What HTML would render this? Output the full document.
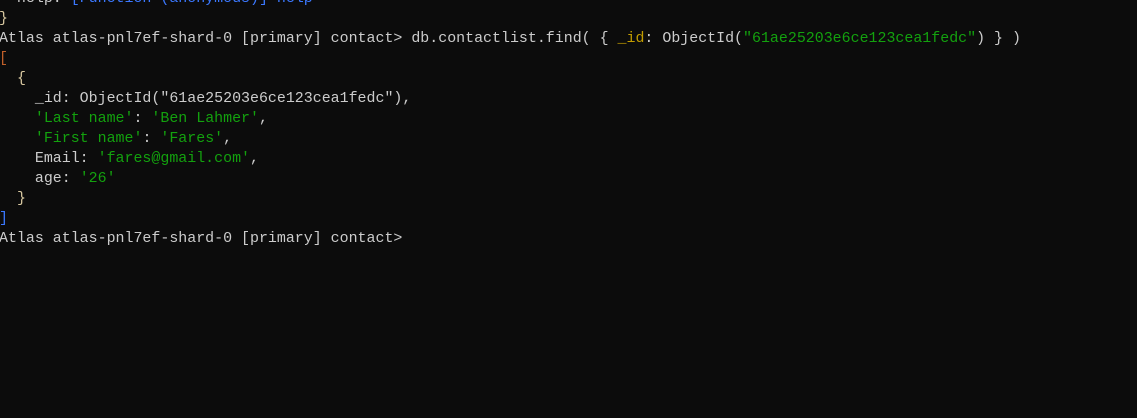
<!DOCTYPE html>
<html><head><meta charset="utf-8"><style>
html,body{margin:0;padding:0;background:#0c0c0c;width:1137px;height:418px;overflow:hidden}
pre{margin:0;position:absolute;left:-1px;top:-11px;font-family:"Liberation Mono","DejaVu Sans Mono",monospace;font-size:14.95px;line-height:20px;color:#cccccc}
.b{color:#3b78ff}.g{color:#13a10e}.y{color:#c19c00}.r{color:#c0602a}.w{color:#d8c8a0}
</style></head><body><pre>  help: <span class="b">[Function (anonymous)] help</span>
<span class="w">}</span>
Atlas atlas-pnl7ef-shard-0 [primary] contact&gt; db.contactlist.find( { <span class="y">_id</span>: ObjectId(<span class="g">"61ae25203e6ce123cea1fedc"</span>) } )
<span class="r">[</span>
  <span class="w">{</span>
    _id: ObjectId("61ae25203e6ce123cea1fedc"),
    <span class="g">'Last name'</span>: <span class="g">'Ben Lahmer'</span>,
    <span class="g">'First name'</span>: <span class="g">'Fares'</span>,
    Email: <span class="g">'fares@gmail.com'</span>,
    age: <span class="g">'26'</span>
  <span class="w">}</span>
<span class="b">]</span>
Atlas atlas-pnl7ef-shard-0 [primary] contact&gt;
</pre></body></html>
